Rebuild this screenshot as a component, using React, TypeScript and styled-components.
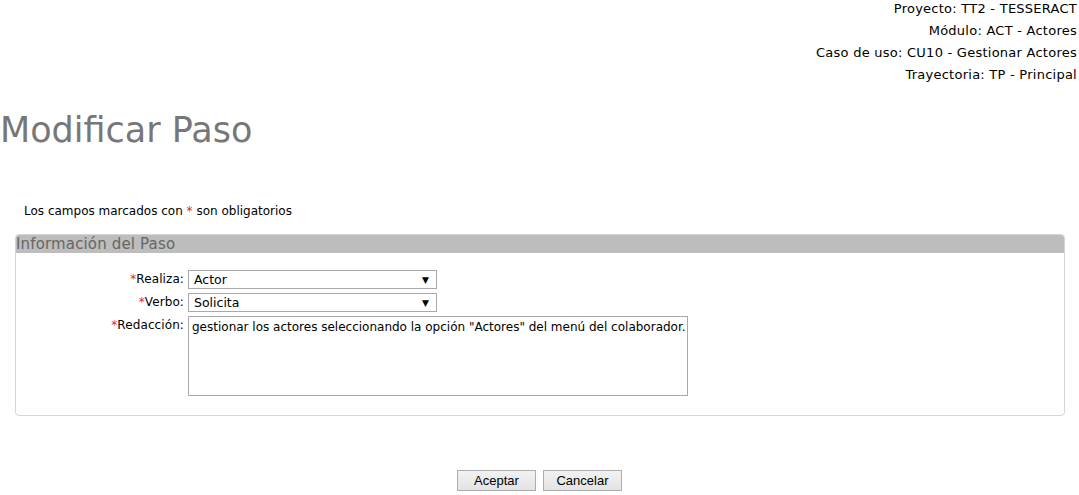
import React from "react";
import styled, { createGlobalStyle } from "styled-components";

const Global = createGlobalStyle`
  html, body { margin: 0; padding: 0; background: #fff; }
  body { font-family: "DejaVu Sans", Verdana, sans-serif; font-size: 12px; color: #000; }
`;

const Page = styled.div`
  width: 1079px;
  display: flex;
  flex-direction: column;
`;

const Info = styled.div`
  display: flex;
  flex-direction: column;
  align-items: flex-end;
  gap: 8px;
  padding: 2px 2px 0 0;
  font-size: 13px;
  letter-spacing: 0.25px;
  line-height: 14px;
  color: #000;
`;

const Title = styled.h1`
  margin: 26px 0 0 0;
  font-weight: normal;
  font-size: 35px;
  line-height: 44px;
  color: #777;
`;

const Note = styled.p`
  margin: 51px 0 0 24px;
  font-size: 12px;
  line-height: 16px;
`;

const Star = styled.span`
  color: #e22;
`;

const Fieldset = styled.section`
  margin: 15px 14px 0 15px;
  border: 1px solid #d5d5d5;
  border-radius: 4px;
  padding: 0 0 19px;
`;

const Legend = styled.div`
  background: #bdbdbd;
  color: #666;
  font-size: 15px;
  letter-spacing: 0.15px;
  line-height: 18px;
  height: 18px;
  border-radius: 3px 3px 0 0;
`;

const Form = styled.div`
  display: grid;
  grid-template-columns: 168px auto;
  column-gap: 4px;
  row-gap: 4px;
  padding-top: 17px;
  align-items: start;
`;

const Label = styled.label`
  text-align: right;
  font-size: 12px;
  letter-spacing: 0.1px;
  line-height: 18px;
  color: #000;
`;

const SelectBox = styled.div`
  width: 249px;
  height: 19px;
  box-sizing: border-box;
  border: 1px solid #a9a9a9;
  background: #fff;
  display: flex;
  align-items: center;
  justify-content: space-between;
  padding: 0 7px 0 5px;
  font-size: 12.5px;
`;

const Arrow = styled.span`
  font-size: 9px;
  color: #000;
`;

const TextArea = styled.div`
  width: 500px;
  height: 80px;
  box-sizing: border-box;
  border: 1px solid #a9a9a9;
  padding: 2px 3px;
  font-size: 12px;
  line-height: 16px;
  white-space: nowrap;
  overflow: hidden;
`;

const Buttons = styled.div`
  display: flex;
  justify-content: center;
  gap: 7px;
  margin-top: 54px;
`;

const Button = styled.button`
  width: 79px;
  height: 21px;
  box-sizing: border-box;
  border: 1px solid #adadad;
  background: linear-gradient(#f2f2f2, #e3e3e3);
  font-family: "Liberation Sans", Arial, sans-serif;
  font-size: 13px;
  padding: 0;
  color: #000;
`;

export default function App() {
  return (
    <Page>
      <Global />
      <Info>
        <span>Proyecto: TT2 - TESSERACT</span>
        <span>Módulo: ACT - Actores</span>
        <span>Caso de uso: CU10 - Gestionar Actores</span>
        <span>Trayectoria: TP - Principal</span>
      </Info>
      <Title>Modificar Paso</Title>
      <Note>
        Los campos marcados con <Star>*</Star> son obligatorios
      </Note>
      <Fieldset>
        <Legend>Información del Paso</Legend>
        <Form>
          <Label><Star>*</Star>Realiza:</Label>
          <SelectBox>Actor<Arrow>▼</Arrow></SelectBox>
          <Label><Star>*</Star>Verbo:</Label>
          <SelectBox>Solicita<Arrow>▼</Arrow></SelectBox>
          <Label><Star>*</Star>Redacción:</Label>
          <TextArea>gestionar los actores seleccionando la opción "Actores" del menú del colaborador.</TextArea>
        </Form>
      </Fieldset>
      <Buttons>
        <Button>Aceptar</Button>
        <Button>Cancelar</Button>
      </Buttons>
    </Page>
  );
}
